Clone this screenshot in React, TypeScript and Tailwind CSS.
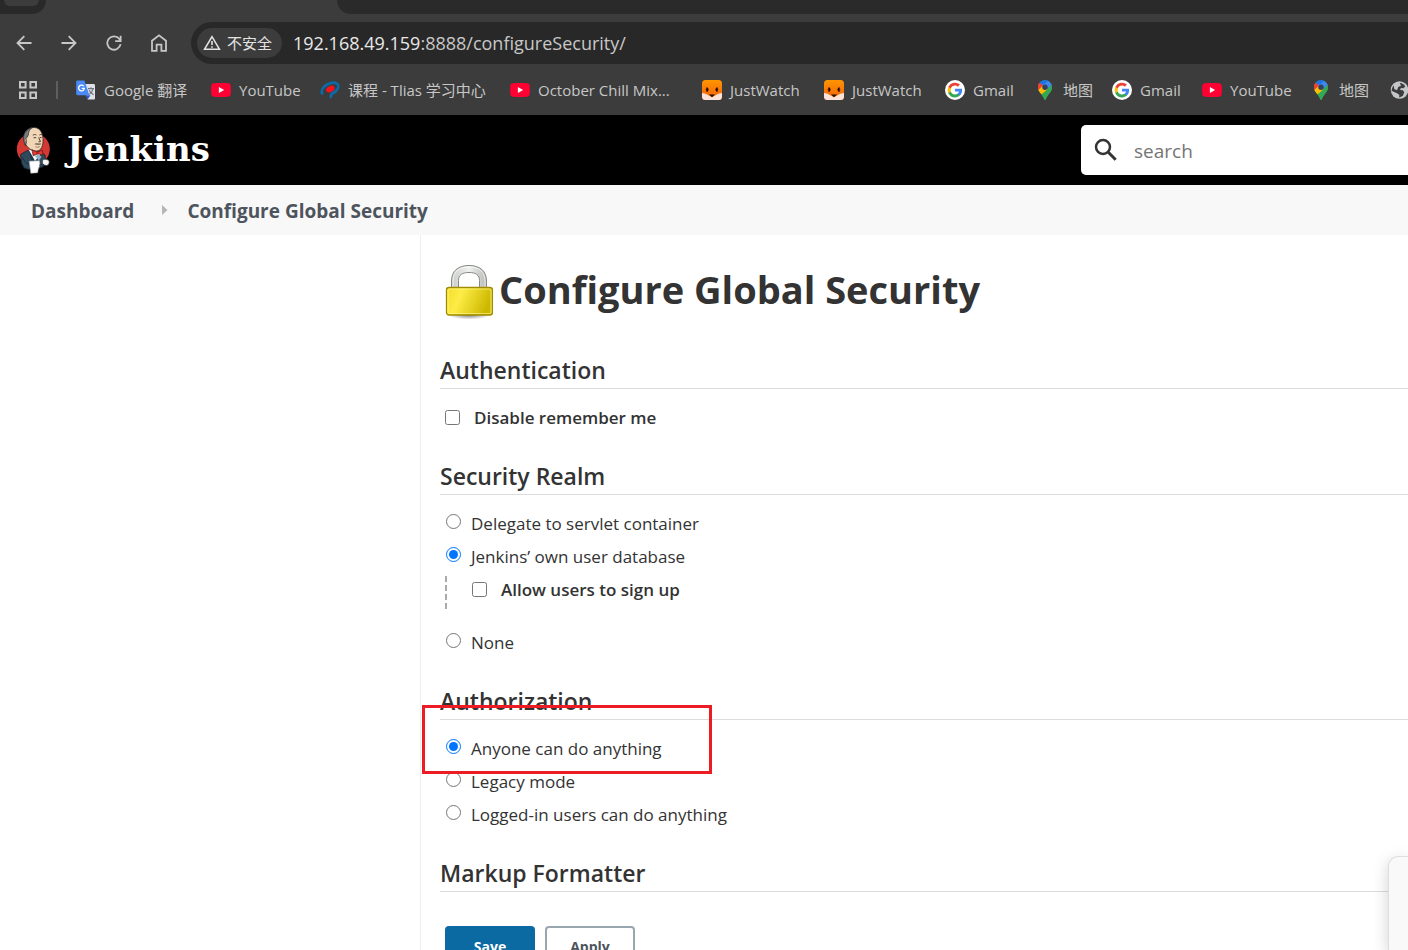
import type { ReactNode } from 'react';

const UI_FONT = "font-['Open_Sans','Noto_Sans_CJK_SC',sans-serif]";

function BackIcon() {
  return (
    <svg width="16" height="16" viewBox="0 0 16 16" fill="none" stroke="currentColor" strokeWidth="1.8">
      <path d="M15.5 8H1.5M8.3 1.2 1.5 8l6.8 6.8" />
    </svg>
  );
}

function ForwardIcon() {
  return (
    <svg width="16" height="16" viewBox="0 0 16 16" fill="none" stroke="currentColor" strokeWidth="1.8">
      <path d="M.5 8h14M7.7 1.2 14.5 8l-6.8 6.8" />
    </svg>
  );
}

function ReloadIcon() {
  return (
    <svg width="16" height="16" viewBox="0 0 16 16" fill="none" stroke="currentColor" strokeWidth="1.8">
      <path d="M14.6 9.2A6.7 6.7 0 1 1 13.4 4L14.6 5.6" />
      <path d="M14.6.8v5.4H9.2" />
    </svg>
  );
}

function HomeIcon() {
  return (
    <svg width="16" height="18" viewBox="0 0 16 18" fill="none" stroke="currentColor" strokeWidth="1.8">
      <path d="M1 16.9V6.8L8 1.4l7 5.4v10.1h-4.6v-6.2H5.6v6.2Z" />
    </svg>
  );
}

function WarningIcon() {
  return (
    <svg width="18" height="16" viewBox="0 0 18 16" fill="none" stroke="currentColor" strokeWidth="1.6">
      <path d="M9 1.7 1.6 14.2h14.8Z" />
      <path d="M9 6v4M9 11.2v1.6" />
    </svg>
  );
}

function AppsIcon() {
  return (
    <svg width="18" height="18" viewBox="0 0 18 18" fill="none" stroke="currentColor" strokeWidth="2">
      <path d="M1 1h5.6v5.6H1ZM11.4 1H17v5.6h-5.6ZM1 11.4h5.6V17H1ZM11.4 11.4H17V17h-5.6Z" />
    </svg>
  );
}

function TranslateIcon() {
  return (
    <svg width="20" height="20" viewBox="0 0 20 20">
      <path d="M7 4h10.6c.8 0 1.4.6 1.4 1.4v12.8c0 .8-.6 1.4-1.4 1.4h-6Z" fill="#dfe1e5" />
      <path d="m9.2 15.2 2.3 4.4 3-4.4Z" fill="#2a56c6" />
      <path d="M1.6.4h6.8l5 14.800H1.600C.8 15.200.2 14.600.2 13.800V1.800C.2 1 .8.400 1.600.400Z" fill="#4a8af4" />
      <path d="M7.800 6.200A2.900 2.900 0 1 0 8.400 8.300H5.700" fill="none" stroke="#fff" strokeWidth="1.300" />
      <path d="M12 8.600h6M15 7.200v1.400M17 8.800c-.5 2.600-2 4.400-3.700 5.400M13.300 10.200c.8 2 2.400 3.600 4.400 4.600" fill="none" stroke="#6b747c" strokeWidth="1.100" />
    </svg>
  );
}

function YouTubeIcon() {
  return (
    <svg width="20" height="20" viewBox="0 0 20 20">
      <path d="M3 3.200c4.500-.4 9.500-.4 14 0 1.600.1 2.600 1.100 2.700 2.700.3 2.700.3 5.500 0 8.200-.1 1.600-1.100 2.600-2.700 2.700-4.500.4-9.500.4-14 0C1.400 16.700.4 15.700.3 14.100 0 11.400 0 8.600.3 5.900.4 4.300 1.400 3.300 3 3.200Z" fill="#ff0033" />
      <path d="m7.900 7 5.200 3-5.200 3Z" fill="#fff" />
    </svg>
  );
}

function TliasIcon() {
  return (
    <svg width="20" height="20" viewBox="0 0 20 20">
      <path d="M2 13.500C.6 9.500 4.800 4.600 10.300 3.100c5.700-1.400 9.300 1.200 7.500 5.300-1.300 2.900-4.200 4.600-6.300 5.600l-.8 3" fill="none" stroke="#0c6aa6" strokeWidth="2.700" strokeLinecap="round" />
      <ellipse cx="10.300" cy="9" rx="4.500" ry="2.900" transform="rotate(-28 10.300 9)" fill="#f5121d" />
    </svg>
  );
}

function FoxIcon() {
  return (
    <svg width="20" height="20" viewBox="0 0 20 20">
      <defs>
        <linearGradient id="fox" x1="0" y1="0" x2="0" y2="1">
          <stop offset="0" stopColor="#ff9500" />
          <stop offset="1" stopColor="#f4600c" />
        </linearGradient>
        <clipPath id="foxClip">
          <rect width="20" height="20" rx="3.500" />
        </clipPath>
      </defs>
      <g clipPath="url(#foxClip)">
        <rect width="20" height="20" fill="url(#fox)" />
        <path d="M0 13c2 0 5.500 1.500 10 4.300 4.500-2.800 8-4.300 10-4.300V20H0Z" fill="#fde3da" />
        <path d="M7 14.500h6L10 17.300Z" fill="#22110c" />
        <ellipse cx="5" cy="9.600" rx="1.300" ry="2.600" fill="#7a2a08" />
        <ellipse cx="15" cy="9.600" rx="1.300" ry="2.600" fill="#7a2a08" />
        <ellipse cx="5.500" cy="9.600" rx=".9" ry="1.700" fill="#160a06" />
        <ellipse cx="14.500" cy="9.600" rx=".9" ry="1.700" fill="#160a06" />
      </g>
    </svg>
  );
}

function GoogleIcon() {
  return (
    <svg width="20" height="20" viewBox="0 0 20 20">
      <circle cx="10" cy="10" r="10" fill="#fff" />
      <g transform="translate(2.600 2.600) scale(.617)">
        <path fill="#4285f4" d="M23.500 12.300c0-.8-.1-1.600-.2-2.300H12v4.500h6.500c-.3 1.500-1.100 2.700-2.400 3.600v3h3.900c2.200-2.100 3.500-5.200 3.500-8.800Z" />
        <path fill="#34a853" d="M12 24c3.200 0 6-1.100 7.900-2.900l-3.900-3c-1 .7-2.400 1.200-4.100 1.200-3.100 0-5.800-2.100-6.700-4.900h-4v3.100C3.300 21.300 7.300 24 12 24Z" />
        <path fill="#fbbc05" d="M5.300 14.300a7.100 7.100 0 0 1 0-4.600V6.600h-4a12 12 0 0 0 0 10.800Z" />
        <path fill="#ea4335" d="M12 4.800c1.800 0 3.300.6 4.600 1.800L20 3.200A12 12 0 0 0 1.300 6.600l4 3.100C6.200 6.900 8.900 4.800 12 4.800Z" />
      </g>
    </svg>
  );
}

function MapsIcon() {
  return (
    <svg width="20" height="20" viewBox="0 0 20 20">
      <defs>
        <clipPath id="pinClip">
          <path d="M10 .3a7 7 0 0 1 7 7c0 3-1.500 4.500-3.200 6.700-1.500 2-2.300 3.300-2.900 5.200-.3.9-1.500.9-1.800 0-.6-1.900-1.400-3.200-2.900-5.200C4.500 11.800 3 10.300 3 7.300a7 7 0 0 1 7-7Z" />
        </clipPath>
      </defs>
      <g clipPath="url(#pinClip)">
        <rect width="20" height="20" fill="#34a853" />
        <path d="M3 13 14 .3 0 0v13Z" fill="#1a73e8" />
        <path d="M0 0h4.600l4 5.300L3 12.500H0Z" fill="#ea4335" />
        <path d="M4.600 2.800 8 6 15 -1H5Z" fill="#1a73e8" />
        <path d="m16 2-8.500 9 1.500 1L17.500 4 20 0H14l-6 5 3 2Z" fill="#4285f4" />
        <path d="m2 11.500 6-7 5 5L5.500 15Z" fill="#fbbc04" />
        <path d="M2 11V4l2.500-1.300L8 5.500Z" fill="#ea4335" />
        <path d="M16 5.500 6 16l6 5 6-8Z" fill="#34a853" />
      </g>
      <circle cx="10" cy="7.300" r="2.700" fill="#33405e" />
    </svg>
  );
}

function GlobeIcon() {
  return (
    <svg width="20" height="20" viewBox="0 0 20 20">
      <circle cx="9.500" cy="10" r="8.800" fill="#c4c7c9" />
      <path d="M9.800 3c1.800-.3 4.400 1.200 5.400 3.300l-1.600 1.900-2.700-.2-.8 2 2.700.2 1.500 2.100-1.600 3.600-3.600 1.600.2-2.500-1.800-1.500-5.500-2.400-.3 1.300c-.3-3 .6-5.300 2-6.900l.6 3.600 2.700 1.200 1.200-3.300 2.800-1.300Z" fill="#3c3c3c" />
    </svg>
  );
}

type Bookmark = { label: string; icon: ReactNode; width: string };

const bookmarks: Bookmark[] = [
  { label: 'Google 翻译', icon: <TranslateIcon />, width: 'w-[135px]' },
  { label: 'YouTube', icon: <YouTubeIcon />, width: 'w-[109px]' },
  { label: '课程 - Tlias 学习中心', icon: <TliasIcon />, width: 'w-[190px]' },
  { label: 'October Chill Mix...', icon: <YouTubeIcon />, width: 'w-[192px]' },
  { label: 'JustWatch', icon: <FoxIcon />, width: 'w-[122px]' },
  { label: 'JustWatch', icon: <FoxIcon />, width: 'w-[121px]' },
  { label: 'Gmail', icon: <GoogleIcon />, width: 'w-[90px]' },
  { label: '地图', icon: <MapsIcon />, width: 'w-[77px]' },
  { label: 'Gmail', icon: <GoogleIcon />, width: 'w-[90px]' },
  { label: 'YouTube', icon: <YouTubeIcon />, width: 'w-[109px]' },
  { label: '地图', icon: <MapsIcon />, width: 'w-[79px]' },
  { label: '', icon: <GlobeIcon />, width: 'w-5' },
];

function BrowserChrome() {
  return (
    <div className="shrink-0 bg-[#3c3c3c] text-[#c7c7c7]">
      <div className="flex h-[14px] bg-[#3c3c3c]">
        <div className="w-[46px] rounded-br-[14px] bg-[#292929] pl-1">
          <div className="h-[6px] w-[35px] rounded-b-[12px] bg-[#3c3c3c]" />
        </div>
        <div className="w-[291px]" />
        <div className="flex-1 rounded-bl-[14px] bg-[#2a2a2a]" />
      </div>
      <div className="flex h-[58px] items-center pl-[16px]">
        <nav aria-label="Browser navigation" className="flex items-center gap-[29px]">
          <button type="button" aria-label="Back"><BackIcon /></button>
          <button type="button" aria-label="Forward"><ForwardIcon /></button>
          <button type="button" aria-label="Reload"><ReloadIcon /></button>
          <button type="button" aria-label="Home"><HomeIcon /></button>
        </nav>
        <div className="ml-6 flex h-[42px] flex-1 items-center rounded-l-full bg-[#282828] pl-[6px]">
          <button type="button" className="flex h-[30px] items-center gap-[6px] rounded-full bg-[#3c3c3c] pr-[10px] pl-[6px] text-[15px] whitespace-nowrap text-[#e3e3e3]">
            <WarningIcon />
            不安全
          </button>
          <p className="ml-[11px] text-[18px] whitespace-nowrap">
            <span className="text-[#e8e8e8]">192.168.49.159</span>:8888/configureSecurity/
          </p>
        </div>
      </div>
      <div className="flex h-[43px] items-center overflow-hidden pb-[7px] pl-[19px] text-[15px] whitespace-nowrap">
        <button type="button" aria-label="Apps"><AppsIcon /></button>
        <span className="mr-[18px] ml-[19px] h-[18px] w-[2px] shrink-0 bg-[#5e5e5e]" />
        {bookmarks.map((b, i) => (
          <a key={i} href="#" aria-label={b.label || 'Website'} className={`flex shrink-0 items-center gap-[8px] ${b.width}`}>
            <span className="shrink-0">{b.icon}</span>
            {b.label}
          </a>
        ))}
      </div>
    </div>
  );
}

function JenkinsButler() {
  return (
    <svg width="34" height="48" viewBox="0 0 34 48">
      <ellipse cx="17.300" cy="23" rx="16.500" ry="16" fill="#d33833" />
      <path d="M4.500 28.500 11.500 24.500l13 1.500 4.500 3 .8 9.500-6.800 4-11 .8-4-1.300L5.500 37Z" fill="#2f4a5c" stroke="#14202a" strokeWidth=".8" />
      <path d="M6.500 31.500c1.500 3 2.500 5.500 6.500 6.800" fill="none" stroke="#14202a" strokeWidth=".7" />
      <path d="M12.500 23.500 19 35l6.500-8Z" fill="#f4f4f4" />
      <path d="M13 25 18.500 34.500l-3.500-1Z" fill="#1f3442" />
      <path d="M9.500 5.500C13 1 20 .2 23.500 3.500c3 3 3.800 7.500 3.500 12.500-.2 6-3.500 9.500-7.500 9-4.500-.5-9-3.500-10.500-8.500C7.800 12.500 7.500 8.500 9.500 5.500Z" fill="#f0d6b7" stroke="#2b2522" strokeWidth=".8" />
      <path d="M9.200 19.500C6.800 14 6.800 9 9.800 5.500c2-2.300 4.600-3.800 7.200-4.200-3.800 2.200-4.400 4.400-4.600 7.500l-1.200 2.500-1.400 1.200.6 4Z" fill="#777b80" stroke="#26282b" strokeWidth=".7" />
      <path d="M9.600 12.200c-1.600.5-1.200 4.200.9 4.700Z" fill="#f0d6b7" stroke="#3d332c" strokeWidth=".5" />
      <path d="M16.800 9.300c1.200-1 2.600-1 3.600-.2M23.400 9c1-.7 2-.6 2.800 0M17.600 11.700h2.600M23.700 11.600h1.800M22.600 11.500l1.900 4-2 .4" fill="none" stroke="#3b2c24" strokeWidth=".9" />
      <path d="M18.300 18.200c1.400-1.400 3.400-1.300 4.500-.6 1-.7 2-.4 2.800.3-1.800 1.500-4.900 1.400-7.300.3Z" fill="#8a7261" />
      <path d="M19.500 20.700c1.500.7 3 .6 4.300-.1" fill="none" stroke="#80523c" strokeWidth=".7" />
      <path d="m16 23.800 5.400 2.400 5-2.200.6 5-5-1.200-4.800 2Z" fill="#e23a35" stroke="#571717" strokeWidth=".7" />
      <circle cx="21.600" cy="27" r="1.400" fill="#b9211f" />
      <path d="m19 30 3.500-1.200 3 2-2.500 3.800Z" fill="#8fb3c2" />
      <path d="M26.500 34c2.500-1.300 6-.6 6.500 1.200.5 2-.3 4-2.500 4.300l-4-.9Z" fill="#f7f5f1" stroke="#40464b" strokeWidth=".7" />
      <path d="M13.300 35.300 23.500 34.800 24 40.500l-1.500 1.200-.9 5-6.800.5Z" fill="#fff" stroke="#aeb6bb" strokeWidth=".6" />
      <path d="M23.800 38.800c1.500-1 2.600-1 3.700-.6l-.5 2.600-3 .6Z" fill="#2f4a5c" stroke="#14202a" strokeWidth=".6" />
    </svg>
  );
}

function SearchIcon() {
  return (
    <svg width="24" height="24" viewBox="0 0 24 24" fill="none" stroke="#333" strokeWidth="2.500">
      <circle cx="9" cy="9" r="7" />
      <path d="m14.300 14.300 7.400 7.400" strokeWidth="3" />
    </svg>
  );
}

function PadlockIcon() {
  return (
    <svg width="48" height="56" viewBox="0 0 48 56" className="shrink-0">
      <defs>
        <linearGradient id="brass" x1="0" y1="0" x2="1" y2=".25">
          <stop offset="0" stopColor="#f5df2c" />
          <stop offset=".35" stopColor="#fdec45" />
          <stop offset="1" stopColor="#cdb800" />
        </linearGradient>
        <linearGradient id="steel" x1="0" y1="0" x2="1" y2="0">
          <stop offset="0" stopColor="#c9cdc9" />
          <stop offset=".5" stopColor="#f0f1ef" />
          <stop offset="1" stopColor="#b7bab6" />
        </linearGradient>
        <radialGradient id="shade">
          <stop offset="0" stopColor="#000" stopOpacity=".5" />
          <stop offset="1" stopColor="#000" stopOpacity="0" />
        </radialGradient>
      </defs>
      <ellipse cx="24" cy="51" rx="21" ry="4.500" fill="url(#shade)" />
      <path d="M6.500 26V17C6.500 7 13 1.500 24 1.500S41.500 7 41.500 17v9h-7v-9.500C34.500 11 31 8.500 24 8.500s-10.500 2.500-10.500 8V26Z" fill="url(#steel)" stroke="#858983" strokeWidth="1" />
      <path d="M8 25v-8C8 8 14 3 24 3s16 5 16 14v8" fill="none" stroke="#fff" strokeOpacity=".7" />
      <rect x="1.500" y="23.500" width="46" height="27.500" rx="2.500" fill="url(#brass)" stroke="#a08a00" strokeWidth="1.300" />
      <rect x="3" y="25" width="43" height="24.500" rx="1.500" fill="none" stroke="#fff58a" strokeOpacity=".65" strokeWidth="1.200" />
    </svg>
  );
}

function Section({ title, children }: { title: string; children?: ReactNode }) {
  return (
    <section className="relative mb-[21px]">
      <h2 className="mb-3 flex h-10 items-center border-b border-[#dcdcdc] pt-[3px] text-[23px] leading-[36px] font-semibold">{title}</h2>
      {children}
    </section>
  );
}

function RadioRow({ name, label, checked }: { name: string; label: string; checked?: boolean }) {
  return (
    <label className="flex h-[33px] w-fit items-center gap-[10px] pl-[6px] text-[17px] whitespace-nowrap">
      <input type="radio" name={name} defaultChecked={checked} className="mb-1 size-[15px] accent-[#0075ff]" />
      {label}
    </label>
  );
}

function CheckRow({ label }: { label: string }) {
  return (
    <label className="flex h-[33px] w-fit items-center gap-[14px] pl-[5px] text-[17px] font-semibold whitespace-nowrap">
      <input type="checkbox" className="size-[15px]" />
      {label}
    </label>
  );
}

export default function App() {
  return (
    <div className={`relative flex h-screen flex-col overflow-hidden bg-white text-[#333] ${UI_FONT}`}>
      <BrowserChrome />
      <header className="flex h-[70px] shrink-0 items-center justify-between bg-black pl-4">
        <a href="#" className="flex items-center gap-[17px] text-white">
          <JenkinsButler />
          <span className="pb-[2px] font-['DejaVu_Serif',serif] text-[34px] leading-[40px] font-bold">Jenkins</span>
        </a>
        <div className="flex h-[50px] w-[327px] items-center gap-[16px] rounded-l-[5px] bg-white pl-[13px]">
          <SearchIcon />
          <input type="search" aria-label="Search" placeholder="search" className="min-w-0 flex-1 pt-[2px] text-[19px] outline-none placeholder:text-[#757575]" />
        </div>
      </header>
      <nav aria-label="Breadcrumb" className="flex h-[50px] shrink-0 items-center bg-[#f8f8f8] pt-[2px] pl-[31px] text-[19px] font-bold whitespace-nowrap text-[#4d545d]">
        <a href="#">Dashboard</a>
        <svg width="6" height="12" viewBox="0 0 6 12" className="mr-[19px] mb-[2px] ml-[28px]">
          <path d="M0 1v10l5.500-5Z" fill="#b5b5b5" />
        </svg>
        <a href="#">Configure Global Security</a>
      </nav>
      <main className="ml-[420px] min-h-0 flex-1 border-l border-[#eaeff2] pl-[19px]">
        <h1 className="mt-[27px] mb-[27px] flex h-[60px] items-center gap-[6px] pl-[5px] text-[38px] leading-[44px] font-bold whitespace-nowrap">
          <PadlockIcon />
          <span className="pb-[6px]">Configure Global Security</span>
        </h1>
        <form>
          <Section title="Authentication">
            <CheckRow label="Disable remember me" />
          </Section>
          <Section title="Security Realm">
            <RadioRow name="realm" label="Delegate to servlet container" />
            <RadioRow name="realm" label="Jenkins’ own user database" checked />
            <div className="mt-[3px] mb-[17px] flex h-[33px] items-center pb-[6px] pl-[5px]">
              <svg width="2" height="33" viewBox="0 0 2 33" className="mt-[6px] mr-5">
                <path d="M1 0v33" stroke="#aaa" strokeWidth="2" strokeDasharray="6 3" />
              </svg>
              <CheckRow label="Allow users to sign up" />
            </div>
            <RadioRow name="realm" label="None" />
          </Section>
          <Section title="Authorization">
            <RadioRow name="authorization" label="Anyone can do anything" checked />
            <RadioRow name="authorization" label="Legacy mode" />
            <RadioRow name="authorization" label="Logged-in users can do anything" />
            <div className="pointer-events-none absolute top-[25px] -left-[18px] h-[69px] w-[290px] border-3 border-[#ed1c24]" />
          </Section>
          <Section title="Markup Formatter" />
          <div className="flex gap-[10px] pt-[13px] pl-[5px] text-[14px] font-bold">
            <button type="submit" className="h-10 w-[90px] rounded-[4px] bg-[#0b6aa2] text-white">Save</button>
            <button type="button" className="h-10 w-[90px] rounded-[4px] border-2 border-[#98a6b0] bg-white text-[#4d545d]">Apply</button>
          </div>
        </form>
      </main>
      <div className="absolute right-0 bottom-0 h-[94px] w-5 rounded-tl-[10px] border-t border-l border-[#dedede] bg-[#f9f9f9] shadow-[0_4px_16px_rgba(0,0,0,0.18)]" />
    </div>
  );
}
